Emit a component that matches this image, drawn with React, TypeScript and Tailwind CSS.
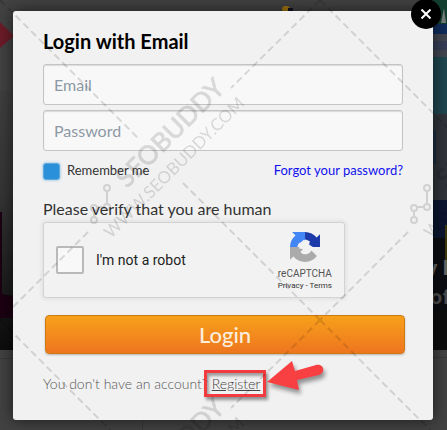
import React from "react";

const tiles = [
  { x: 0, y: 0, label: true },
  { x: 320, y: 0, label: true },
  { x: 0, y: 320, label: true },
  { x: 320, y: 320, label: false },
];

function Backdrop() {
  return (
    <svg className="absolute inset-0 h-full w-full" aria-hidden="true" preserveAspectRatio="xMinYMin slice">
      <defs>
        <linearGradient id="side" x1="0" y1="0" x2="0" y2="1">
          <stop offset="0" stopColor="#3f3f3f" />
          <stop offset="0.4" stopColor="#353535" />
          <stop offset="1" stopColor="#0c0c0c" />
        </linearGradient>
      </defs>
      <rect width="100%" height="100%" fill="#424242" />
      <rect y="90" width="13" height="260" fill="url(#side)" />
      <path d="M0 22 L14 36 L0 48Z" fill="#6b1c28" />
      <path d="M0 212 L2 212 L2 294 L13 296 L13 318 L0 318Z" fill="#1c0012" />
      <ellipse cx="286" cy="9" rx="4" ry="3" fill="#a8780f" />
      <rect x="288" y="8" width="5" height="3" fill="#111122" />
      <path d="M433 0H447V24H433Z" fill="#123f2f" />
      <path d="M441 23L444 8L446 23Z" fill="#777f7c" />
      <rect x="433" y="24" width="14" height="10" fill="#102c5c" />
      <rect x="433" y="34" width="14" height="23" fill="#41454f" />
      <rect x="433" y="41" width="14" height="9" fill="#353e56" />
      <rect x="433" y="57" width="14" height="57" fill="#1f464f" />
      <rect x="433" y="114" width="14" height="88" fill="#30343a" />
      <rect x="433" y="130" width="3" height="34" fill="#1c2d40" />
      <rect x="433" y="200" width="14" height="40" fill="#0c1630" />
      <rect x="433" y="238" width="14" height="112" fill="#0c0d12" />
      <rect x="445" y="225" width="2" height="50" fill="#3e3510" />
      <rect x="433" y="310" width="14" height="40" fill="#0e0e0e" />
      <text x="426" y="275" fontSize="20" fontWeight="700" fill="#666" className="font-['Open_Sans',sans-serif]">y l</text>
      <text x="430" y="304" fontSize="20" fontWeight="700" fill="#4c4c4c" className="font-['Open_Sans',sans-serif]">of</text>
      <path d="M0 358.500H13M433 357.500H447M142.500 420V430" stroke="#383838" />
    </svg>
  );
}

function Watermark() {
  return (
    <svg className="pointer-events-none absolute inset-0 h-full w-full" aria-hidden="true">
      <g opacity="0.13" fill="none" stroke="#000">
        {tiles.map(({ x, y, label }) => (
          <g key={`${x},${y}`} transform={`translate(${x} ${y})`}>
            <path
              d="M0 0L138 138M183 183L320 320M320 0L231 88M88 232L0 320"
              strokeWidth="2"
              strokeDasharray="7 4"
            />
            <path d="M107 191V204M104 207H97M94 211V217" strokeWidth="2" />
            <circle cx="107" cy="188" r="3" strokeWidth="2" />
            <circle cx="107" cy="207" r="3" strokeWidth="2" />
            <circle cx="94" cy="208" r="3" strokeWidth="2" />
            <circle cx="94" cy="220" r="3" strokeWidth="2" />
            {label && (
              <g fill="#000" className="font-[Lato,sans-serif]">
                <text transform="translate(127 189) rotate(-45)" fontSize="26" fontWeight="500" strokeWidth="0.6">SEOBUDDY</text>
                <text transform="translate(111 239) rotate(-45)" fontSize="17" fontWeight="400" stroke="none">WWW.SEOBUDDY.COM</text>
              </g>
            )}
          </g>
        ))}
      </g>
    </svg>
  );
}

function RecaptchaLogo() {
  return (
    <svg className="h-[30px] w-[30px]" viewBox="0 0 64 64" aria-hidden="true">
      <path fill="#1c3aa9" d="M64 31.955a33 33 0 0 0-.035-1.375V4.687l-7.158 7.159C50.948 4.674 42.033.093 32.050.093v15.880c4 0 7.400 1.900 9.800 5L30.500 32H64z" />
      <path fill="#4285f4" d="M31.862.094a33 33 0 0 0-1.375.035H4.594l7.159 7.158C4.581 13.146 0 22.060 0 32.043h15.880c0-4 1.900-7.400 5-9.800L32 33V.094z" />
      <path fill="#ababab" d="M.001 32.045c.1.460.13.918.035 1.375v25.893l7.158-7.159C13.053 59.327 21.967 63.907 31.950 63.907c10.389 0 19.618-4.960 25.451-12.642L45.667 39.407c-1.150 2.127-2.783 3.954-4.757 5.336-2.053 1.602-4.961 2.912-8.961 2.912-4 0-7.400-1.900-9.800-5L32 32z" />
      <path fill="#f2f2f2" d="M22 23l8-7 5 6 7-3-1 8 8 5-8 1 1 8-8-3-5 6-2-8-8-1z" />
    </svg>
  );
}

const field =
  "block h-[41px] w-full rounded-[3px] border border-[#c4c4c4] bg-[#f8f8f8] px-[10px] text-[16px] text-[#444] shadow-[inset_0_1px_1px_rgba(0,0,0,0.12)] outline-none placeholder:text-[#8d99a5]";

export default function App() {
  return (
    <main className="relative min-h-screen overflow-hidden pt-[11px] pr-[14px] pb-[10px] pl-[13px] font-[Lato,sans-serif]">
      <Backdrop />
      <section
        role="dialog"
        aria-labelledby="title"
        className="relative rounded-[3px] bg-[#f1f1f1] px-[30px] pt-[18px] pb-[26px] shadow-[0_0_16px_rgba(0,0,0,0.6)]"
      >
        <form onSubmit={(e) => e.preventDefault()}>
          <h1 id="title" className="text-[20px] leading-[25px] font-bold text-black">Login with Email</h1>
          <div className="mt-[10px] flex flex-col gap-[5px]">
            <input className={field} type="email" placeholder="Email" aria-label="Email" />
            <input className={field} type="password" placeholder="Password" aria-label="Password" />
          </div>
          <div className="mt-[10px] flex h-5 items-center justify-between text-[13px]">
            <label className="flex items-center gap-[7px] text-[#333]">
              <input
                type="checkbox"
                defaultChecked
                className="h-[17px] w-[17px] appearance-none rounded-[3px] border border-[#5fa9da] bg-[#2a90d9] shadow-[0_0_3px_rgba(42,144,217,0.6)]"
              />
              Remember me
            </label>
            <a href="#forgot" className="text-[#1111ee]">Forgot your password?</a>
          </div>
          <p className="mt-[18px] text-[16px] leading-5 text-[#333]">Please verify that you are human</p>
          <div className="mt-[3px] flex h-[76px] w-[302px] items-center justify-between rounded-[3px] border border-[#d3d3d3] bg-[#f2f2f2] pr-3 pl-3 font-[Roboto,sans-serif] shadow-[0_0_4px_1px_rgba(0,0,0,0.08)]">
            <label className="flex items-center gap-3 text-[14px] text-[#222]">
              <input type="checkbox" className="h-7 w-7 appearance-none rounded-[2px] border-2 border-[#b9b9b9] bg-[#f8f8f8]" />
              I'm not a robot
            </label>
            <div className="flex flex-col items-center pt-1 text-[#555]">
              <RecaptchaLogo />
              <span className="mt-[5px] text-[10px] leading-[13px]">reCAPTCHA</span>
              <span className="text-[8px] leading-[12px] text-[#333]">
                <a href="#privacy">Privacy</a> - <a href="#terms">Terms</a>
              </span>
            </div>
          </div>
          <button
            type="submit"
            className="relative left-[2px] mt-[17px] block h-[39px] w-full rounded-[4px] border border-[#cf7b14] bg-linear-to-b from-[#f7a01a] to-[#ee751f] text-[22px] leading-none font-medium text-[#fbeedd] shadow-[0_1px_2px_rgba(0,0,0,0.25)]"
          >
            Login
          </button>
          <p className="mt-5 text-[14px] leading-5 font-light whitespace-nowrap text-[#555]">
            You don't have an account?{" "}
            <span className="relative">
              <a href="#register" className="text-[#444] underline">Register</a>
              <span className="pointer-events-none absolute -top-[5px] -right-[6px] -left-2 h-[27px] border-[3px] border-[#f23b3f] shadow-[2px_3px_3px_rgba(0,0,0,0.4),inset_2px_3px_3px_rgba(0,0,0,0.35)]" />
              <svg className="pointer-events-none absolute -top-[16px] left-full ml-[6px] h-[42px] w-[64px] drop-shadow-[2px_4px_2px_rgba(0,0,0,0.4)]" viewBox="0 0 64 42" aria-hidden="true">
                <path d="M1 23L26 2L29 12L50 6C58 4 60 14 53 16L31 21L33 31Z" fill="#f83f42" />
              </svg>
            </span>
          </p>
        </form>
      </section>
      <Watermark />
      <button
        type="button"
        aria-label="Close"
        className="absolute -top-px right-[6px] flex h-[30px] w-[30px] items-center justify-center rounded-full bg-black"
      >
        <svg className="h-[10px] w-[10px]" viewBox="0 0 10 10" aria-hidden="true">
          <path d="M0.500 0.500L9.500 9.500M9.500 0.500L0.500 9.500" stroke="#fff" strokeWidth="2" />
        </svg>
      </button>
    </main>
  );
}
